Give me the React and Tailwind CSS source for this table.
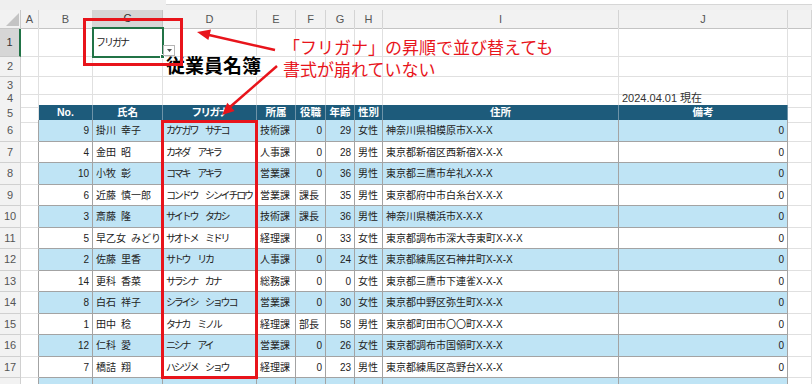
import React from "react";

const GRID =
  "grid grid-cols-[21px_18px_54px_70px_94px_39px_30px_29px_28px_236px_169px_24px]";

const rows = [
  [9, "掛川\u2002幸子", "カケガワ　サチコ", "技術課", "0", 29, "女性", "神奈川県相模原市X-X-X"],
  [4, "金田\u2002昭", "カネダ　アキラ", "人事課", "0", 28, "男性", "東京都新宿区西新宿X-X-X"],
  [10, "小牧\u2002彰", "コマキ　アキラ", "営業課", "0", 36, "男性", "東京都三鷹市牟礼X-X-X"],
  [6, "近藤\u2002慎一郎", "コンドウ　シンイチロウ", "営業課", "課長", 35, "男性", "東京都府中市白糸台X-X-X"],
  [3, "斎藤\u2002隆", "サイトウ　タカシ", "技術課", "課長", 36, "男性", "神奈川県横浜市X-X-X"],
  [5, "早乙女\u2002みどり", "サオトメ　ミドリ", "経理課", "0", 33, "女性", "東京都調布市深大寺東町X-X-X"],
  [2, "佐藤\u2002里香", "サトウ　リカ", "人事課", "0", 24, "女性", "東京都練馬区石神井町X-X-X"],
  [14, "更科\u2002香菜", "サラシナ　カナ", "総務課", "0", 0, "女性", "東京都三鷹市下連雀X-X-X"],
  [8, "白石\u2002祥子", "シライシ　ショウコ", "営業課", "0", 30, "女性", "東京都中野区弥生町X-X-X"],
  [1, "田中\u2002稔", "タナカ　ミノル", "経理課", "部長", 58, "男性", "東京都町田市〇〇町X-X-X"],
  [12, "仁科\u2002愛", "ニシナ　アイ", "営業課", "0", 26, "女性", "東京都調布市国領町X-X-X"],
  [7, "橋詰\u2002翔", "ハシヅメ　ショウ", "経理課", "0", 23, "男性", "東京都練馬区高野台X-X-X"],
];

const letters = ["A", "B", "C", "D", "E", "F", "G", "H", "I", "J", ""];

function RowHead({ n, sel }) {
  return (
    <div
      className={
        sel
          ? "flex items-center justify-center bg-[#d6d6d6] border-r-2 border-r-[#217346] border-b border-b-[#c8c8c8] text-[11px] text-[#333]"
          : "flex items-center justify-center bg-[#f2f2f2] border-r border-b border-[#d0d0d0] text-[11px] text-[#555]"
      }
    >
      {n}
    </div>
  );
}

function Blank({ children, className = "" }) {
  return (
    <div className={"border-r border-b border-[#e0e0e0] whitespace-nowrap " + className}>
      {children}
    </div>
  );
}

function SheetRow({ n, h, sel, cells = {} }) {
  return (
    <div className={GRID + " " + h}>
      <RowHead n={n} sel={sel} />
      {letters.map((l, i) => (
        <Blank key={i} className={cells[l + "_cls"] || ""}>
          {cells[l]}
        </Blank>
      ))}
    </div>
  );
}

const td = "flex items-center border-r border-b border-[#a3a3a3] px-[3px] whitespace-nowrap overflow-hidden";

export default function App() {
  return (
    <div className="relative w-[812px] h-[384px] overflow-hidden bg-white text-[#222] [font-family:'Liberation_Sans','Noto_Sans_CJK_JP',sans-serif]">
      {/* formula bar edge */}
      <div className="flex h-[10px] bg-[#efefef]">
        <div className="w-[166px]" />
        <div className="flex-1 h-[5px] bg-white border-b border-[#d6d6d6]" />
      </div>

      {/* column letters */}
      <div className={GRID + " h-[18px]"}>
        <div className="relative bg-[#f2f2f2] border-r border-b border-[#c8c8c8]">
          <svg className="absolute right-[1px] bottom-[2px]" width="13" height="13" viewBox="0 0 13 13">
            <polygon points="13,0 13,13 0,13" fill="#c4c4c4" />
          </svg>
        </div>
        {letters.map((l, i) =>
          l === "C" ? (
            <div
              key={i}
              className="flex items-center justify-center bg-[#d6d6d6] border-r border-[#c4c4c4] border-b-2 border-b-[#217346] text-[11px] text-[#333]"
            >
              {l}
            </div>
          ) : (
            <div
              key={i}
              className="flex items-center justify-center bg-[#f2f2f2] border-r border-[#d4d4d4] border-b border-b-[#c4c4c4] text-[11px] text-[#555]"
            >
              {l}
            </div>
          )
        )}
      </div>

      <SheetRow
        n={1}
        h="h-[29px]"
        sel
        cells={{
          C: <span className="flex h-full items-center pl-[3px] text-[10px] tracking-[-2px]">フリガナ</span>,
        }}
      />
      <SheetRow
        n={2}
        h="h-[20px]"
        cells={{
          D: (
            <span className="flex h-full items-center pl-[3px] text-[19px] font-bold text-black leading-none">
              従業員名簿
            </span>
          ),
          D_cls: "border-r-transparent",
        }}
      />
      <SheetRow n={3} h="h-[13px]" />
      <SheetRow
        n={4}
        h="h-[15px]"
        cells={{
          J: <span className="flex h-full items-center pl-[3px] text-[11px] text-[#333]">2024.04.01 現在</span>,
        }}
      />

      {/* table header */}
      <div className={GRID + " h-[15px]"}>
        <RowHead n={5} />
        <Blank />
        {["No.", "氏名", "フリガナ", "所属", "役職", "年齢", "性別", "住所", "備考"].map((t) => (
          <div
            key={t}
            className={
              "flex items-center justify-center bg-[#1d5b7b] border-r border-[#6d93a8] border-b border-b-[#1d5b7b] text-white font-bold text-[10.5px]" +
              (t === "フリガナ" ? " tracking-[-1.5px]" : "")
            }
          >
            {t}
          </div>
        ))}
        <Blank />
      </div>

      {rows.map((r, i) => {
        const bg = i % 2 === 0 ? "bg-[#bfe4f5]" : "bg-white";
        const h = i % 2 === 0 ? "h-[22px]" : "h-[21px]";
        return (
          <div key={i} className={GRID + " " + h + " text-[10px]"}>
            <RowHead n={i + 6} />
            <div className="border-r border-b border-[#e0e0e0] border-r-[#a3a3a3]" />
            <div className={td + " " + bg + " justify-end"}>{r[0]}</div>
            <div className={td + " " + bg}>{r[1]}</div>
            <div className={td + " " + bg + " tracking-[-2.2px]"}>{r[2]}</div>
            <div className={td + " " + bg}>{r[3]}</div>
            <div className={td + " " + bg + (r[4] === "0" ? " justify-end" : "")}>{r[4]}</div>
            <div className={td + " " + bg + " justify-end"}>{r[5]}</div>
            <div className={td + " " + bg}>{r[6]}</div>
            <div className={td + " " + bg}>{r[7]}</div>
            <div className={td + " " + bg + " justify-end"}>0</div>
            <Blank />
          </div>
        );
      })}

      {/* row 18, cut off */}
      <div className={GRID + " h-[22px]"}>
        <div className="bg-[#f2f2f2] border-r border-[#d0d0d0]" />
        <div className="border-r border-[#a3a3a3]" />
        {Array.from({ length: 9 }).map((_, i) => (
          <div key={i} className="bg-[#bfe4f5] border-r border-[#a3a3a3]" />
        ))}
        <Blank />
      </div>

      {/* selection on C1 */}
      <div className="absolute left-[92px] top-[27px] w-[72px] h-[31px] border-2 border-[#217346]" />
      <div className="absolute left-[160px] top-[54px] w-[5px] h-[5px] bg-[#217346] border border-white" />
      <div className="absolute left-[163px] top-[45px] w-[12px] h-[11px] bg-white border border-[#b5b5b5] flex items-center justify-center">
        <svg width="5" height="3" viewBox="0 0 5 3">
          <polygon points="0,0 5,0 2.5,3" fill="#555" />
        </svg>
      </div>

      {/* callouts */}
      <div className="absolute left-[83px] top-[18px] w-[100px] h-[48px] border-[3px] border-[#e8141b]" />
      <div className="absolute left-[161px] top-[120px] w-[97px] h-[259px] border-[3px] border-[#e8141b]" />

      <svg className="absolute left-0 top-0 pointer-events-none" width="812" height="384">
        <line x1="275" y1="50" x2="209" y2="35" stroke="#e8141b" strokeWidth="2.5" />
        <polygon points="197,32 211,29.6 208.4,40" fill="#e8141b" />
        <line x1="277" y1="66" x2="230" y2="107" stroke="#e8141b" strokeWidth="2.5" />
        <polygon points="222,115 227.3,102.8 234.6,110.9" fill="#e8141b" />
      </svg>

      <div className="absolute left-[283px] top-[36px] text-[17px] leading-[22px] text-[#e8141b] [font-family:'Noto_Sans_CJK_JP',sans-serif]">
        <div>「フリガナ」の昇順で並び替えても</div>
        <div>書式が崩れていない</div>
      </div>
    </div>
  );
}
